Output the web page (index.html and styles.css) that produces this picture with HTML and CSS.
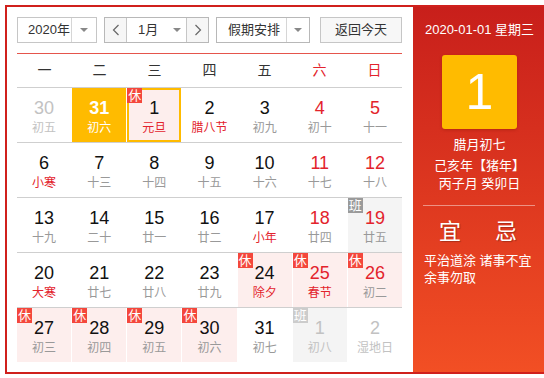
FILE: index.html
```html
<!DOCTYPE html>
<html lang="zh">
<head>
<meta charset="utf-8">
<title>万年历</title>
<link rel="stylesheet" href="styles.css">
</head>
<body>
<div class="cal">
  <div class="main">
    <div class="toolbar">
      <div class="sel year"><span class="val">2020年</span><span class="drop"><i class="tri"></i></span></div>
      <div class="mgroup">
        <span class="nav"><svg width="8" height="12" viewBox="0 0 8 12"><polyline points="6.5,1 1.5,6 6.5,11" fill="none" stroke="#666" stroke-width="1.2"/></svg></span>
        <span class="mval">1月<i class="tri"></i></span>
        <span class="nav"><svg width="8" height="12" viewBox="0 0 8 12"><polyline points="1.5,1 6.5,6 1.5,11" fill="none" stroke="#666" stroke-width="1.2"/></svg></span>
      </div>
      <div class="sel holiday"><span class="val">假期安排</span><span class="drop"><i class="tri"></i></span></div>
      <div class="btn-today">返回今天</div>
    </div>
    <div class="redline"></div>
    <div class="week">
      <span>一</span><span>二</span><span>三</span><span>四</span><span>五</span><span class="we">六</span><span class="we">日</span>
    </div>
    <div class="row">
      <div class="cell other"><div class="n">30</div><div class="l">初五</div></div>
      <div class="cell sel-day"><div class="n">31</div><div class="l">初六</div></div>
      <div class="cell today rest"><i class="badge">休</i><div class="n">1</div><div class="l fest">元旦</div></div>
      <div class="cell"><div class="n">2</div><div class="l fest">腊八节</div></div>
      <div class="cell"><div class="n">3</div><div class="l">初九</div></div>
      <div class="cell wk"><div class="n">4</div><div class="l">初十</div></div>
      <div class="cell wk"><div class="n">5</div><div class="l">十一</div></div>
    </div>
    <div class="row">
      <div class="cell"><div class="n">6</div><div class="l fest">小寒</div></div>
      <div class="cell"><div class="n">7</div><div class="l">十三</div></div>
      <div class="cell"><div class="n">8</div><div class="l">十四</div></div>
      <div class="cell"><div class="n">9</div><div class="l">十五</div></div>
      <div class="cell"><div class="n">10</div><div class="l">十六</div></div>
      <div class="cell wk"><div class="n">11</div><div class="l">十七</div></div>
      <div class="cell wk"><div class="n">12</div><div class="l">十八</div></div>
    </div>
    <div class="row">
      <div class="cell"><div class="n">13</div><div class="l">十九</div></div>
      <div class="cell"><div class="n">14</div><div class="l">二十</div></div>
      <div class="cell"><div class="n">15</div><div class="l">廿一</div></div>
      <div class="cell"><div class="n">16</div><div class="l">廿二</div></div>
      <div class="cell"><div class="n">17</div><div class="l fest">小年</div></div>
      <div class="cell wk"><div class="n">18</div><div class="l">廿四</div></div>
      <div class="cell wk work"><i class="badge">班</i><div class="n">19</div><div class="l">廿五</div></div>
    </div>
    <div class="row">
      <div class="cell"><div class="n">20</div><div class="l fest">大寒</div></div>
      <div class="cell"><div class="n">21</div><div class="l">廿七</div></div>
      <div class="cell"><div class="n">22</div><div class="l">廿八</div></div>
      <div class="cell"><div class="n">23</div><div class="l">廿九</div></div>
      <div class="cell rest"><i class="badge">休</i><div class="n">24</div><div class="l fest">除夕</div></div>
      <div class="cell wk rest"><i class="badge">休</i><div class="n">25</div><div class="l fest">春节</div></div>
      <div class="cell wk rest"><i class="badge">休</i><div class="n">26</div><div class="l">初二</div></div>
    </div>
    <div class="row">
      <div class="cell rest"><i class="badge">休</i><div class="n">27</div><div class="l">初三</div></div>
      <div class="cell rest"><i class="badge">休</i><div class="n">28</div><div class="l">初四</div></div>
      <div class="cell rest"><i class="badge">休</i><div class="n">29</div><div class="l">初五</div></div>
      <div class="cell rest"><i class="badge">休</i><div class="n">30</div><div class="l">初六</div></div>
      <div class="cell"><div class="n">31</div><div class="l">初七</div></div>
      <div class="cell other work"><i class="badge">班</i><div class="n">1</div><div class="l">初八</div></div>
      <div class="cell other"><div class="n">2</div><div class="l">湿地日</div></div>
    </div>
  </div>
  <div class="side">
    <div class="s-date">2020-01-01 星期三</div>
    <div class="big">1</div>
    <div class="s-l1">腊月初七</div>
    <div class="s-l2">己亥年【猪年】</div>
    <div class="s-l3">丙子月 癸卯日</div>
    <div class="s-line"></div>
    <div class="yiji"><span>宜</span><span>忌</span></div>
    <div class="s-text">平治道涂 诸事不宜<br>余事勿取</div>
  </div>
</div>
</body>
</html>
```

FILE: styles.css
```css
html, body {
  margin: 0;
  overflow: hidden;
  background: #fff;
}
body {
  padding: 5px 0 0 5px;
  font-family: "Liberation Sans", "Noto Sans CJK SC", sans-serif;
  color: #333;
}
.cal {
  display: flex;
  width: 541px;
  height: 369px;
  box-sizing: border-box;
  border: 2px solid #d0201c;
  border-right: 0;
}
.main {
  width: 406px;
  flex: none;
  box-sizing: border-box;
  padding: 10px 11px 0 10px;
}
.toolbar {
  display: flex;
  height: 26px;
  font-size: 13px;
}
.sel, .mgroup, .btn-today {
  box-sizing: border-box;
  height: 26px;
  border: 1px solid #c6c6c6;
  display: flex;
  align-items: stretch;
}
.sel .val {
  flex: 1;
  line-height: 24px;
  padding-left: 10px;
}
.sel .drop {
  width: 24px;
  border-left: 1px solid #d6d6d6;
  display: flex;
  align-items: center;
  justify-content: center;
}
.tri {
  display: inline-block;
  width: 0;
  height: 0;
  border-left: 4px solid transparent;
  border-right: 4px solid transparent;
  border-top: 4px solid #888;
}
.year { width: 80px; }
.year .val { padding-left: 10px; }
.mgroup {
  width: 105px;
  margin-left: 7px;
  border-color: #b8b8b8;
}
.nav {
  width: 21px;
  background: #f6f6f6;
  display: flex;
  align-items: center;
  justify-content: center;
}
.mval {
  flex: 1;
  border-left: 1px solid #c6c6c6;
  border-right: 1px solid #c6c6c6;
  line-height: 24px;
  padding-left: 11px;
  display: flex;
  align-items: center;
}
.mval .tri { margin-left: 15px; }
.holiday {
  width: 94px;
  margin-left: 7px;
  border-color: #b8b8b8;
}
.holiday .val { padding-left: 11px; }
.holiday .drop { width: 22px; }
.btn-today {
  width: 82px;
  margin-left: 10px;
  background: #f7f7f7;
  justify-content: center;
  line-height: 24px;
}
.redline {
  height: 1px;
  margin-top: 10px;
  background: #e5554c;
}
.week {
  display: grid;
  grid-template-columns: repeat(7, 1fr);
  height: 33px;
  line-height: 33px;
  text-align: center;
  font-size: 14px;
  color: #333;
}
.week .we { color: #e3232c; }
.row {
  display: grid;
  grid-template-columns: repeat(7, 1fr);
  column-gap: 1px;
  height: 55px;
  box-sizing: border-box;
  border-top: 1px solid #cfcfcf;
}
.cell {
  position: relative;
  box-sizing: border-box;
  padding-top: 10px;
  text-align: center;
}
.n {
  font-size: 18px;
  line-height: 20px;
  color: #111;
}
.l {
  font-size: 12px;
  line-height: 20px;
  color: #999;
}
.wk .n { color: #e3232c; }
.l.fest { color: #e3232c; }
.other .n, .other .l { color: #c2c2c2; }
.rest { background: #fdeeed; }
.work { background: #f4f4f4; }
.sel-day { background: #ffbb00; }
.sel-day .n { color: #fff; font-weight: bold; }
.sel-day .l { color: #fff; }
.today { box-shadow: inset 0 0 0 2px #ffbb00; }
.badge {
  position: absolute;
  left: 0;
  top: 0;
  width: 15px;
  height: 15px;
  line-height: 15px;
  font-size: 13px;
  font-style: normal;
  text-align: center;
  color: #fff;
  background: #f4473c;
}
.work .badge { background: #9a9a9a; }
.other.work .badge { background: #cccccc; }
.side {
  flex: 1;
  background: linear-gradient(#c81f1b, #f24f24);
  color: #fff;
  text-align: center;
  padding-top: 13px;
  font-size: 13px;
  font-family: "Liberation Sans", "Noto Sans CJK SC", sans-serif;
}
.s-date { line-height: 20px; }
.big {
  width: 75px;
  height: 74px;
  margin: 15px auto 0;
  background: #ffbb00;
  border-radius: 3px;
  box-shadow: 0 1px 3px rgba(120, 20, 0, .35);
  font-size: 50px;
  line-height: 74px;
}
.s-l1 { margin-top: 6px; line-height: 20px; }
.s-l2 { margin-top: 1px; line-height: 20px; }
.s-l3 { line-height: 16px; }
.s-line {
  height: 1px;
  margin: 13px 11px 0 10px;
  background: rgba(255, 255, 255, .45);
}
.yiji {
  display: flex;
  margin-top: 11px;
  padding-left: 9px;
  height: 30px;
  line-height: 30px;
  font-size: 22px;
  text-shadow: 1px 1px 1px rgba(0, 0, 0, .25);
}
.yiji span { width: 56px; text-align: center; }
.s-text {
  margin-top: 5px;
  padding-left: 11px;
  text-align: left;
  line-height: 17px;
}
```
